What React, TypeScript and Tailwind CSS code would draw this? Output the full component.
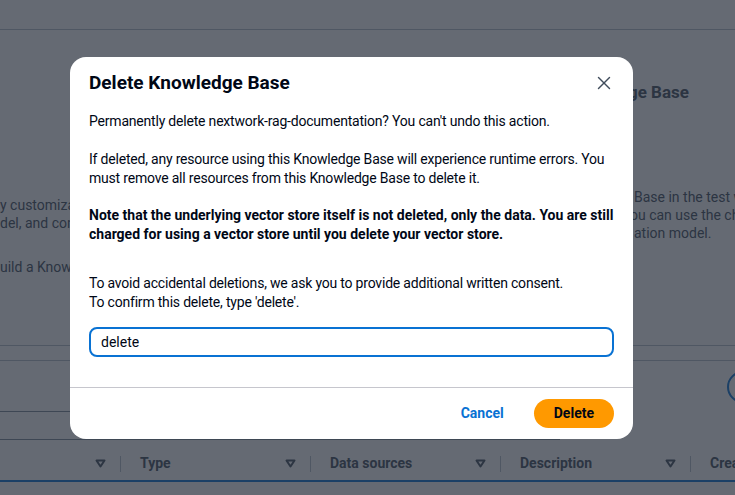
import { X } from 'lucide-react'

const font = { fontFamily: 'Roboto, "Noto Sans", sans-serif' }

function SortCaret() {
  return (
    <svg width="11" height="9" viewBox="0 0 11 9" className="shrink-0">
      <path d="M1.5 1.5h8L5.5 7.5z" fill="none" stroke="#414d5c" strokeWidth="2" strokeLinejoin="round" />
    </svg>
  )
}

const columns = ['Name', 'Type', 'Data sources', 'Description', 'Created']

function Page() {
  return (
    <div className="w-[770px] bg-white text-[#414d5c]">
      <div className="h-[30px] border-b border-[#b6bec9]" />

      <div className="flex h-[315px]">
        <div className="w-[630px] shrink-0 pt-[166px] text-[14px] leading-[18px]">
          <p className="whitespace-nowrap">y customization options for your models</p>
          <p className="whitespace-nowrap">del, and connect your data sources</p>
          <p className="mt-[26px] whitespace-nowrap">uild a Knowledge Base</p>
        </div>
        <div className="min-w-0 pt-[50px]">
          <h2 className="-ml-[2px] text-[17px] leading-[24px] font-bold text-[#414d5c] whitespace-nowrap">ge Base</h2>
          <div className="mt-[84px] text-[14px] leading-[18px] whitespace-nowrap">
            <p className="pl-[4px]">Base in the test window</p>
            <p>ou can use the chat</p>
            <p className="pl-[4px]">ation model.</p>
          </div>
        </div>
      </div>

      <div className="h-[16px] border-y border-[#b6bec9]" />

      <div className="flex h-[86px] justify-between">
        <div className="mt-[50px] h-[29px] w-[560px] border-y border-[#7d8998]" />
        <div className="mr-[11px] mt-[10px] h-[32px] w-[32px] rounded-full border-2 border-[#0972d3]" />
      </div>

      <div className="-ml-[70px] flex h-[35px] items-center border-b-2 border-[#0972d3]">
        {columns.map((c) => (
          <div key={c} className="flex w-[190px] shrink-0 items-center">
            <div className="h-[16px] w-px bg-[#b6bec9]" />
            <span className="flex-1 pl-[19px] text-[14px] font-bold text-[#414d5c] whitespace-nowrap">{c}</span>
            <div className="pr-[14px]">
              <SortCaret />
            </div>
          </div>
        ))}
      </div>
    </div>
  )
}

export default function App() {
  return (
    <div className="relative h-[495px] w-[735px] overflow-hidden" style={font}>
      <Page />

      <div className="absolute inset-0 bg-[rgba(35,43,55,0.7)]" />

      <div className="absolute left-[70px] top-[57px] w-[563px] rounded-2xl bg-white text-[#000716]">
        <div className="flex items-start justify-between pl-[19px] pr-[18px] pt-[14px]">
          <h2 className="text-[19px] leading-[24px] font-bold">Delete Knowledge Base</h2>
          <button className="mt-[1px] text-[#414d5c]">
            <X size={22} strokeWidth={1.6} />
          </button>
        </div>

        <div className="px-[19px] pb-[30px] pt-[17px] text-[14px] leading-[19px]">
          <p className="tracking-[-0.2px]">Permanently delete nextwork-rag-documentation? You can't undo this action.</p>
          <p className="mt-[19px] tracking-[-0.2px]">
            If deleted, any resource using this Knowledge Base will experience runtime errors. You must remove all
            resources from this Knowledge Base to delete it.
          </p>
          <p className="mt-[18px] font-bold">
            Note that the underlying vector store itself is not deleted, only the data. You are still charged for using a
            vector store until you delete your vector store.
          </p>
          <p className="mt-[30px] tracking-[-0.2px]">
            To avoid accidental deletions, we ask you to provide additional written consent.
            <br />
            To confirm this delete, type 'delete'.
          </p>
          <input
            readOnly
            value="delete"
            className="mt-[15px] h-[30px] w-full rounded-lg border-2 border-[#0972d3] px-[10px] text-[14px] text-[#000716] outline-none"
          />
        </div>

        <div className="flex items-center justify-end gap-[30px] border-t border-[#c6c6cd] px-[19px] py-[11px]">
          <button className="text-[14px] font-bold text-[#0972d3]">Cancel</button>
          <button className="h-[29px] rounded-full bg-[#ff9900] px-[20px] text-[14px] font-bold text-[#000716]">
            Delete
          </button>
        </div>
      </div>
    </div>
  )
}
